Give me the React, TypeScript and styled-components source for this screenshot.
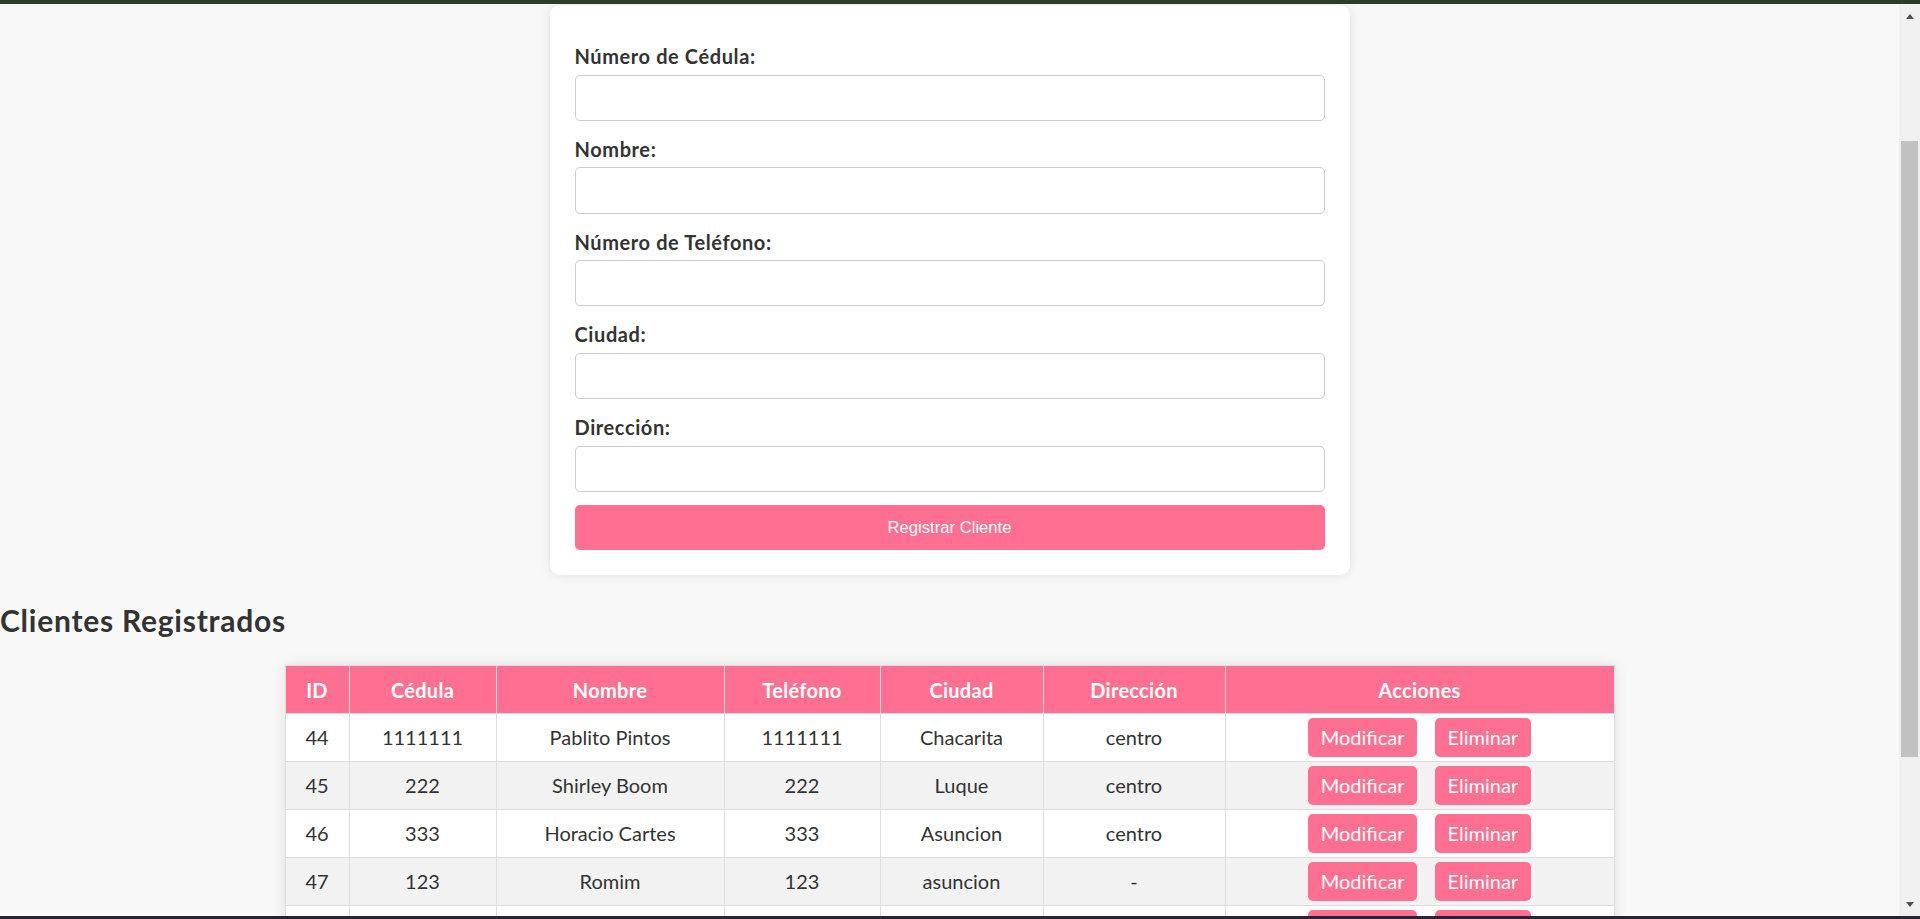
import React from "react";
import styled, { createGlobalStyle } from "styled-components";

const GlobalStyle = createGlobalStyle`
  html, body {
    margin: 0;
    padding: 0;
    overflow: hidden;
    background: #f8f8f8;
  }
  * { box-sizing: border-box; }
`;

const PINK = "#ff6f91";
const FONT = `"Lato", "Segoe UI", "Open Sans", sans-serif`;

const Frame = styled.div`
  height: 919px;
  display: flex;
  flex-direction: column;
  font-family: ${FONT};
  color: #333;
`;

const Strip = styled.div<{ $tone: string; $h: number }>`
  flex: 0 0 ${(p) => p.$h}px;
  background: ${(p) => p.$tone};
`;

const Viewport = styled.div`
  flex: 1;
  min-height: 0;
  display: flex;
`;

const Page = styled.main`
  flex: 1;
  min-width: 0;
  overflow: hidden;
  background: #f8f8f8;
`;

const Card = styled.section`
  width: 800px;
  margin: 1px auto 0;
  padding: 36px 25px 25px;
  background: #fff;
  border-radius: 10px;
  box-shadow: 0 0 12px rgba(0, 0, 0, 0.1);
`;

const Form = styled.form`
  display: flex;
  flex-direction: column;
`;

const Field = styled.div`
  display: flex;
  flex-direction: column;
`;

const Label = styled.label`
  margin: 2px 0 5px;
  font-size: 20px;
  line-height: 26.5px;
  font-weight: 700;
  letter-spacing: 0.6px;
  color: #333;
`;

const Input = styled.input`
  height: 46.25px;
  margin: 0 0 13px;
  padding: 0 12px;
  border: 1px solid #ccc;
  border-radius: 5px;
  background: #fff;
  font-family: ${FONT};
  font-size: 20px;
  outline: none;
`;

const SubmitButton = styled.button`
  height: 45.5px;
  border: none;
  border-radius: 5px;
  background: ${PINK};
  color: #fff;
  font-family: "Liberation Sans", Arial, sans-serif;
  font-size: 16.67px;
  cursor: pointer;
`;

const SectionTitle = styled.h2`
  margin: 25px 0;
  font-size: 30px;
  line-height: 40px;
  font-weight: 700;
  letter-spacing: 0.75px;
  color: #333;
`;

const Table = styled.table`
  width: 1329px;
  margin: 0 auto;
  table-layout: fixed;
  border-collapse: collapse;
  background: #fff;
  box-shadow: 0 0 12px rgba(0, 0, 0, 0.1);
`;

const HeadRow = styled.tr`
  height: 47.5px;
`;

const BodyRow = styled.tr<{ $striped: boolean }>`
  height: 48px;
  background: ${(p) => (p.$striped ? "#f2f2f2" : "#fff")};
`;

const HeadCell = styled.th`
  border: 1px solid #ddd;
  padding: 0 12px;
  background: ${PINK};
  color: #fff;
  font-size: 20px;
  font-weight: 700;
  letter-spacing: 0.3px;
  text-align: center;
`;

const Cell = styled.td`
  border: 1px solid #ddd;
  padding: 0 12px;
  font-size: 20px;
  color: #333;
  text-align: center;
  white-space: nowrap;
`;

const Actions = styled.div`
  display: flex;
  justify-content: center;
  gap: 18px;
`;

const ActionButton = styled.button`
  height: 38.5px;
  padding: 0 12.5px;
  border: none;
  border-radius: 5px;
  background: ${PINK};
  color: #fff;
  font-family: ${FONT};
  font-size: 20px;
  cursor: pointer;
`;

const Scrollbar = styled.aside`
  flex: 0 0 21px;
  display: flex;
  flex-direction: column;
  background: #f0f0f0;
`;

const ArrowButton = styled.div<{ $h: number }>`
  flex: 0 0 ${(p) => p.$h}px;
  display: flex;
  align-items: center;
  justify-content: center;
`;

const Triangle = styled.span<{ $down?: boolean }>`
  width: 0;
  height: 0;
  border-left: 4.5px solid transparent;
  border-right: 4.5px solid transparent;
  ${(p) =>
    p.$down
      ? "border-top: 5px solid #505050;"
      : "border-bottom: 5px solid #505050;"}
`;

const Track = styled.div`
  flex: 1;
  display: flex;
  flex-direction: column;
  padding: 0 2px;
`;

const Thumb = styled.div`
  background: #c1c1c1;
`;

const columns = [
  { key: "id", title: "ID", width: 64 },
  { key: "cedula", title: "Cédula", width: 147 },
  { key: "nombre", title: "Nombre", width: 228 },
  { key: "telefono", title: "Teléfono", width: 156 },
  { key: "ciudad", title: "Ciudad", width: 163 },
  { key: "direccion", title: "Dirección", width: 182 },
  { key: "acciones", title: "Acciones", width: 389 },
];

type Cliente = {
  id: number;
  cedula: string;
  nombre: string;
  telefono: string;
  ciudad: string;
  direccion: string;
};

const clientes: Cliente[] = [
  { id: 44, cedula: "1111111", nombre: "Pablito Pintos", telefono: "1111111", ciudad: "Chacarita", direccion: "centro" },
  { id: 45, cedula: "222", nombre: "Shirley Boom", telefono: "222", ciudad: "Luque", direccion: "centro" },
  { id: 46, cedula: "333", nombre: "Horacio Cartes", telefono: "333", ciudad: "Asuncion", direccion: "centro" },
  { id: 47, cedula: "123", nombre: "Romim", telefono: "123", ciudad: "asuncion", direccion: "-" },
  { id: 48, cedula: "456", nombre: "Ana Gómez", telefono: "456", ciudad: "Lambaré", direccion: "centro" },
];

const fields = [
  { id: "cedula", label: "Número de Cédula:" },
  { id: "nombre", label: "Nombre:" },
  { id: "telefono", label: "Número de Teléfono:" },
  { id: "ciudad", label: "Ciudad:" },
  { id: "direccion", label: "Dirección:" },
];

export default function App() {
  return (
    <>
      <GlobalStyle />
      <Frame>
        <Strip $tone="#2e3c2c" $h={4} />
        <Viewport>
          <Page>
            <Card>
              <Form onSubmit={(e) => e.preventDefault()}>
                {fields.map((f) => (
                  <Field key={f.id}>
                    <Label htmlFor={f.id}>{f.label}</Label>
                    <Input id={f.id} type="text" />
                  </Field>
                ))}
                <SubmitButton type="submit">Registrar Cliente</SubmitButton>
              </Form>
            </Card>
            <SectionTitle>Clientes Registrados</SectionTitle>
            <Table>
              <colgroup>
                {columns.map((c) => (
                  <col key={c.key} style={{ width: c.width }} />
                ))}
              </colgroup>
              <thead>
                <HeadRow>
                  {columns.map((c) => (
                    <HeadCell key={c.key}>{c.title}</HeadCell>
                  ))}
                </HeadRow>
              </thead>
              <tbody>
                {clientes.map((c, i) => (
                  <BodyRow key={c.id} $striped={i % 2 === 1}>
                    <Cell>{c.id}</Cell>
                    <Cell>{c.cedula}</Cell>
                    <Cell>{c.nombre}</Cell>
                    <Cell>{c.telefono}</Cell>
                    <Cell>{c.ciudad}</Cell>
                    <Cell>{c.direccion}</Cell>
                    <Cell>
                      <Actions>
                        <ActionButton type="button">Modificar</ActionButton>
                        <ActionButton type="button">Eliminar</ActionButton>
                      </Actions>
                    </Cell>
                  </BodyRow>
                ))}
              </tbody>
            </Table>
          </Page>
          <Scrollbar>
            <ArrowButton $h={25}>
              <Triangle />
            </ArrowButton>
            <Track>
              <Thumb style={{ marginTop: 112, height: 616 }} />
            </Track>
            <ArrowButton $h={23}>
              <Triangle $down />
            </ArrowButton>
          </Scrollbar>
        </Viewport>
        <Strip $tone="#2b2238" $h={3} />
      </Frame>
    </>
  );
}
